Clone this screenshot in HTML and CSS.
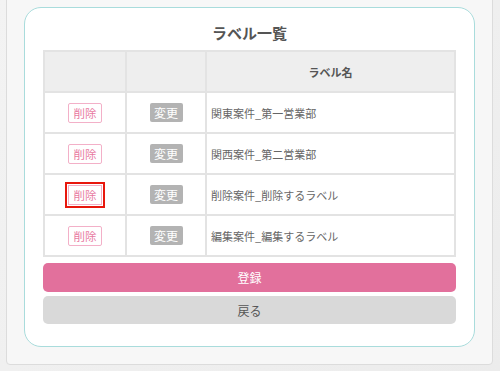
FILE: index.html
```html
<!DOCTYPE html>
<html lang="ja">
<head>
<meta charset="utf-8">
<title>ラベル一覧</title>
<link rel="stylesheet" href="styles.css">
</head>
<body>
<div class="panel">
  <div class="card">
    <h1 class="title">ラベル一覧</h1>
    <table class="labels">
      <colgroup>
        <col class="c-del">
        <col class="c-chg">
        <col class="c-name">
      </colgroup>
      <thead>
        <tr><th></th><th></th><th>ラベル名</th></tr>
      </thead>
      <tbody>
        <tr>
          <td class="ctr"><button class="btn-del">削除</button></td>
          <td class="ctr"><button class="btn-chg">変更</button></td>
          <td class="name">関東案件_第一営業部</td>
        </tr>
        <tr>
          <td class="ctr"><button class="btn-del">削除</button></td>
          <td class="ctr"><button class="btn-chg">変更</button></td>
          <td class="name">関西案件_第二営業部</td>
        </tr>
        <tr>
          <td class="ctr"><button class="btn-del is-marked">削除</button></td>
          <td class="ctr"><button class="btn-chg">変更</button></td>
          <td class="name">削除案件_削除するラベル</td>
        </tr>
        <tr>
          <td class="ctr"><button class="btn-del">削除</button></td>
          <td class="ctr"><button class="btn-chg">変更</button></td>
          <td class="name">編集案件_編集するラベル</td>
        </tr>
      </tbody>
    </table>
    <div class="actions">
      <button class="btn-primary">登録</button>
      <button class="btn-back">戻る</button>
    </div>
  </div>
</div>
</body>
</html>
```
FILE: styles.css
```css
html, body {
  margin: 0;
  padding: 0;
}
body {
  width: 500px;
  height: 371px;
  overflow: hidden;
  background: linear-gradient(135deg, #f3f3f3 0%, #ececec 100%);
  font-family: "Noto Sans CJK JP", "Noto Sans", sans-serif;
}
.panel {
  box-sizing: border-box;
  margin: -1px 0 0 6px;
  width: 487px;
  padding: 7px 17px 17px 17px;
  background: #f7f7f7;
  border: 1px solid #dcdcdc;
  border-radius: 0 0 4px 4px;
}
.card {
  background: #fff;
  border: 1px solid #a9dcdc;
  border-radius: 17px;
  padding: 15px 18px 22px 18px;
}
.title {
  margin: 0 0 7px 0;
  font-size: 15px;
  line-height: 20px;
  font-weight: bold;
  color: #555;
  text-align: center;
}
.labels {
  width: 100%;
  border-collapse: collapse;
  font-size: 11px;
}
.c-del { width: 82px; }
.c-chg { width: 80px; }
.labels th,
.labels td {
  border: 2px solid #e3e3e3;
  height: 39px;
  padding: 0;
}
.labels th {
  background: #eeeeee;
  color: #555;
  font-weight: bold;
  text-align: center;
}
.labels td.ctr {
  text-align: center;
}
.labels td.name {
  padding-left: 4px;
  color: #666;
}
.btn-del,
.btn-chg {
  font-family: inherit;
  font-size: 11.5px;
  line-height: 16px;
  padding: 0;
  border-radius: 2px;
  vertical-align: middle;
  cursor: pointer;
}
.btn-del {
  width: 34px;
  height: 20px;
  background: #fff;
  color: #e879a1;
  border: 1px solid #f3b0c8;
}
.btn-del.is-marked {
  border-radius: 0;
  outline: 2px solid #e8170c;
  outline-offset: 1px;
}
.btn-chg {
  width: 33px;
  height: 19px;
  font-size: 12px;
  background: #b3b3b3;
  color: #fff;
  border: none;
}
.actions {
  margin-top: 6px;
  display: flex;
  flex-direction: column;
  gap: 4px;
}
.btn-primary,
.btn-back {
  font-family: inherit;
  font-size: 12px;
  border: none;
  border-radius: 5px;
  padding: 0;
  cursor: pointer;
}
.btn-primary {
  height: 29px;
  background: #e2709c;
  color: #fff;
}
.btn-back {
  height: 28px;
  background: #d9d9d9;
  color: #555;
}
```
